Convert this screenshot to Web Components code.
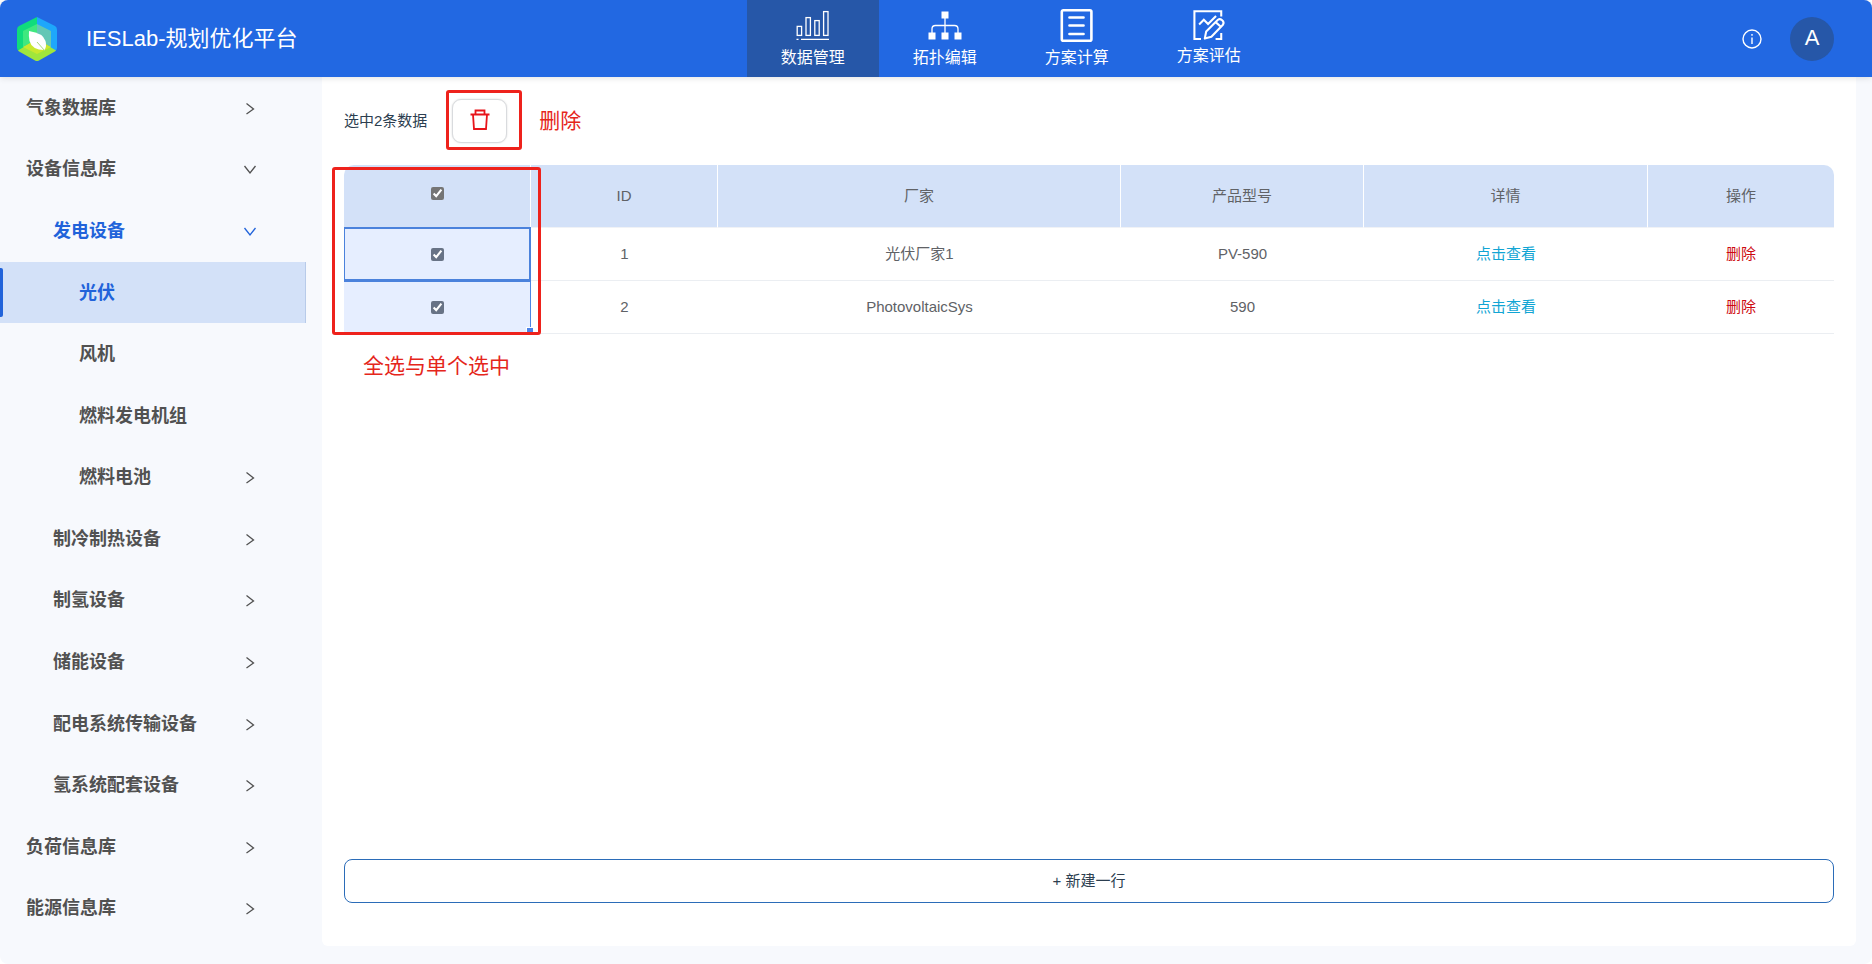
<!DOCTYPE html>
<html lang="zh-CN">
<head>
<meta charset="utf-8">
<title>IESLab-规划优化平台</title>
<style>
  body { margin: 0; background: #fff; font-family: "Liberation Sans", "Noto Sans CJK SC", sans-serif; }
</style>
</head>
<body>
<ies-app></ies-app>
<script>
const define = (name, html) => customElements.define(name, class extends HTMLElement {
  constructor() {
    super();
    this.attachShadow({ mode: "open" }).innerHTML = html;
  }
});

const icons = {
  bars: `<g fill="none" stroke="#fff" stroke-width="1.3"><rect x="1.2" y="18.4" width="4.4" height="9"/><rect x="10" y="9.6" width="4.4" height="17.8"/><rect x="18.800" y="12.6" width="4.4" height="14.8"/><rect x="27.600" y="3.6" width="4.4" height="23.8"/></g><path d="M.5 31.4h2M5 31.4h28" stroke="#fff" stroke-width="1.3"/>`,
  tree: `<path d="M13.5 3.5h7v7h-7zM.5 24.5h7v7h-7zM13.5 24.5h7v7h-7zM26.5 24.5h7v7h-7z" fill="#fff"/><path d="M17 10v15M4 25v-4q0-3.500 3.500-3.500h19q3.500 0 3.500 3.500v4" fill="none" stroke="#fff" stroke-width="1.3"/>`,
  list: `<rect x="1.800" y="2.300" width="29.600" height="30.400" rx="1.500" fill="none" stroke="#fff" stroke-width="2.600"/><path d="M9.500 9.500h14M9.500 17.500h14M9.500 26h14" stroke="#fff" stroke-width="2.700" stroke-linecap="round"/>`,
  edit: `<path d="M30 9V3.500H1.500V33h7M24 33h6v-6.500" fill="none" stroke="#fff" stroke-width="2.200"/><path d="M6.500 17.500l5-5 4.500 4.500 8.500-8.500" fill="none" stroke="#fff" stroke-width="2.200"/><path d="M12.500 32.500l1.500-7.500 12.500-12.500q2-1.500 4.500.5t.8 4.800L19.500 30.500zM24 15l5 4.500" fill="none" stroke="#fff" stroke-width="2.200" stroke-linejoin="round"/>`
};

customElements.define("nav-tab", class extends HTMLElement {
  connectedCallback() {
    this.attachShadow({ mode: "open" }).innerHTML = `
<style>
  :host { display: block; }
  a { box-sizing: border-box; height: 100%; padding-top: 8px; display: flex; flex-direction: column; align-items: center; gap: 6px; color: #fff; text-decoration: none; font-size: 16px; line-height: 20px; }
  svg { width: 34px; height: 34px; }
  :host([compact]) svg { height: 32px; }
  :host([active]) a { background: #2657a8; }
</style>
<a href="#"><svg viewBox="0 0 34 34" aria-hidden="true">${icons[this.getAttribute("icon")]}</svg><slot></slot></a>`;
  }
});

define("app-header", `
<style>
  :host { display: grid; grid-template-columns: 5fr 528px 4fr; height: 77px; background: #2268e2; color: #fff; border-radius: 8px 8px 0 0; box-shadow: 0 1px 6px #0000001f; position: relative; }
  .brand { display: flex; align-items: center; gap: 29px; padding-left: 17px; font-size: 22px; line-height: 28px; white-space: nowrap; }
  .brand svg { width: 40px; height: 44px; }
  nav { display: grid; grid-template-columns: repeat(4, 1fr); }
  .user { display: flex; align-items: center; justify-content: flex-end; gap: 28px; padding-right: 38px; }
  button { border: 0; padding: 0; background: none; color: #fff; font: 22px "Liberation Sans", sans-serif; }
  .info { width: 20px; height: 20px; }
  .info svg { display: block; }
  .avatar { width: 44px; height: 44px; padding-bottom: 2px; border-radius: 50%; background: #2657a8; }
</style>
<div class="brand">
  <svg viewBox="0 0 40 44" aria-hidden="true">
    <path d="M20 0L2 9Q0 10 0 13v18q0 2 2 3l18-12z" fill="#10dc7c"/>
    <path d="M20 0l18 9q2 1 2 4v18q0 2-2 3L20 22z" fill="#1ea7fb"/>
    <path d="M1 33.500L20 22l19 11.500q-.5.8-2 1.500L22 43.500q-2 1-4 0L3 35q-1.500-.7-2-1.500z" fill="#a0e63c"/>
    <path d="M20 7L6 14v16l14-8z" fill="#3fe87f"/>
    <path d="M20 7l14 7v16l-14-8z" fill="#63c7b5"/>
    <path d="M6 30l14-8 14 8-14 7z" fill="#c9e82e"/>
    <path d="M12 14q14 2 16.500 10 1.500 5-1 9Q15 33 12.500 24 11.500 19 12 14z" fill="#fff"/>
    <path d="M20 25l8 9" stroke="#a9d977" stroke-width="1"/>
  </svg>
  <span>IESLab-规划优化平台</span>
</div>
<nav>
  <nav-tab icon="bars" active>数据管理</nav-tab>
  <nav-tab icon="tree">拓扑编辑</nav-tab>
  <nav-tab icon="list">方案计算</nav-tab>
  <nav-tab icon="edit" compact>方案评估</nav-tab>
</nav>
<div class="user">
  <button class="info" aria-label="信息"><svg width="20" height="20" viewBox="0 0 20 20"><circle cx="10" cy="10" r="9" fill="none" stroke="#fff" stroke-width="1.400"/><path d="M10 8.500v6.500M10 5v1.800" stroke="#fff" stroke-width="1.400"/></svg></button>
  <button class="avatar">A</button>
</div>`);

customElements.define("side-item", class extends HTMLElement {
  connectedCallback() {
    const arrow = this.getAttribute("arrow");
    const tag = arrow ? "button" : "a";
    const d = arrow === "down" ? "M1.500 4L7 11l5.500-7" : "M3.500 2.500L10.500 8l-7 5";
    this.attachShadow({ mode: "open" }).innerHTML = `
<style>
  :host { display: flex; flex: 1 0 56px; color: #515151; }
  .row { box-sizing: border-box; width: 100%; display: flex; align-items: center; justify-content: space-between; border: 0; margin: 0; padding: 0 49px 0 26px; background: none; color: inherit; font: bold 18px/26px "Liberation Sans", "Noto Sans CJK SC", sans-serif; text-decoration: none; position: relative; text-align: left; }
  :host([level="2"]) .row { padding-left: 53px; }
  :host([level="3"]) .row { padding-left: 79px; }
  :host([open-path]), :host([active]) { color: #2163da; }
  :host([active]) .row { background: #d3e1f8; border-right: 1px solid #b8cbe9; }
  :host([active]) .row::before { content: ""; position: absolute; left: 0; top: 6px; bottom: 6px; width: 3px; border-radius: 0 2px 2px 0; background: #2163da; }
</style>
<${tag} class="row" ${arrow ? `aria-expanded="${arrow === "down"}"` : `href="#"`}><slot></slot>${arrow ? `<svg width="14" height="14" viewBox="0 0 14 14" aria-hidden="true"><path d="${d}" fill="none" stroke="currentColor" stroke-width="1.300"/></svg>` : ""}</${tag}>`;
  }
});

define("side-menu", `
<style>
  :host { display: flex; }
  nav { flex: 1; display: flex; flex-direction: column; }
</style>
<nav>
  <side-item arrow="right">气象数据库</side-item>
  <side-item arrow="down">设备信息库</side-item>
  <side-item level="2" arrow="down" open-path>发电设备</side-item>
  <side-item level="3" active>光伏</side-item>
  <side-item level="3">风机</side-item>
  <side-item level="3">燃料发电机组</side-item>
  <side-item level="3" arrow="right">燃料电池</side-item>
  <side-item level="2" arrow="right">制冷制热设备</side-item>
  <side-item level="2" arrow="right">制氢设备</side-item>
  <side-item level="2" arrow="right">储能设备</side-item>
  <side-item level="2" arrow="right">配电系统传输设备</side-item>
  <side-item level="2" arrow="right">氢系统配套设备</side-item>
  <side-item arrow="right">负荷信息库</side-item>
  <side-item arrow="right">能源信息库</side-item>
</nav>`);

define("mark-frame", `
<style>
  :host { display: block; position: absolute; box-sizing: border-box; border: 3px solid #ee221c; border-radius: 3px; pointer-events: none; }
</style>`);

define("mark-note", `
<style>
  :host { display: block; color: #e5261b; font-size: 21px; line-height: 28px; }
</style>
<slot></slot>`);

define("device-table", `
<style>
  :host { display: block; }
  table { width: 100%; table-layout: fixed; border-collapse: separate; border-spacing: 0; font-size: 15px; line-height: 20px; color: #606266; text-align: center; }
  th { height: 62px; padding: 0; font-weight: normal; background: #d3e1f8; border-right: 1px solid #fff; border-bottom: 1px solid #f0f2f6; }
  th:first-child { border-top-left-radius: 10px; }
  th:last-child { border-top-right-radius: 10px; border-right: 0; }
  td { height: 52px; padding: 0; border-bottom: 1px solid #ebeef2; }
  input { display: block; width: 13px; height: 13px; margin: 0 auto; accent-color: #757575; }
  th input { margin-bottom: 6px; }
  td input { accent-color: #687386; }
  .pick { position: relative; background: #e6eeff; }
  .pick::after { content: ""; position: absolute; inset: 0; border-right: 1px solid #4b85e4; }
  .current::after { inset: -1px 0 -2px 0; border: 2px solid #4b82dc; border-left-width: 1px; border-bottom-width: 3px; z-index: 1; }
  .handle { position: absolute; right: -2px; bottom: 0; width: 6px; height: 5px; background: #4b82e8; border: 1px solid #fff; border-width: 1px 0 0 1px; z-index: 1; }
  a { color: #11a5d4; text-decoration: none; }
  button { border: 0; padding: 0; background: none; color: #cd0a10; font: inherit; }
</style>
<table>
  <colgroup><col style="width:187px"><col style="width:187px"><col style="width:403px"><col style="width:243px"><col style="width:284px"><col style="width:186px"></colgroup>
  <thead>
    <tr><th><input type="checkbox" checked aria-label="全选"></th><th>ID</th><th>厂家</th><th>产品型号</th><th>详情</th><th>操作</th></tr>
  </thead>
  <tbody>
    <tr><td class="pick current"><input type="checkbox" checked aria-label="选择 1"></td><td>1</td><td>光伏厂家1</td><td>PV-590</td><td><a href="#">点击查看</a></td><td><button>删除</button></td></tr>
    <tr><td class="pick"><input type="checkbox" checked aria-label="选择 2"><span class="handle"></span></td><td>2</td><td>PhotovoltaicSys</td><td>590</td><td><a href="#">点击查看</a></td><td><button>删除</button></td></tr>
  </tbody>
</table>`);

define("data-panel", `
<style>
  :host { display: flex; flex-direction: column; background: #fff; padding: 22px 22px 43px; border-radius: 0 0 6px 6px; }
  .bar { display: flex; align-items: center; margin-bottom: 22px; font-size: 15px; line-height: 20px; color: #2c3e50; }
  .trash { position: relative; margin: 0 32px 0 25px; }
  .trash button { display: flex; justify-content: center; align-items: center; width: 55px; height: 44px; padding: 0 0 2px; background: #fff; border: 1px solid #d9dbde; border-radius: 9px; box-shadow: 0 0 2px #00000026; }
  .trash mark-frame { inset: -9px -15px -7px -6px; }
  .grid { position: relative; }
  .grid mark-frame { left: -12px; top: 2px; bottom: -1px; width: 209px; z-index: 2; }
  .below { margin: 18px 0 24px 19px; }
  .add { margin-top: auto; height: 44px; border: 1px solid #2b6cb8; border-radius: 8px; background: #fff; color: #2c3e50; font: 15px/20px "Liberation Sans", "Noto Sans CJK SC", sans-serif; }
</style>
<div class="bar">
  <span>选中2条数据</span>
  <div class="trash">
    <button aria-label="删除所选"><svg width="20" height="22" viewBox="0 0 20 22"><path d="M.5 5.500h19M3 5.500l1 14.500h12l1-14.500M5.500 5V1.500h9V5" fill="none" stroke="#e8141a" stroke-width="1.800"/></svg></button>
    <mark-frame></mark-frame>
  </div>
  <mark-note>删除</mark-note>
</div>
<div class="grid">
  <device-table></device-table>
  <mark-frame></mark-frame>
</div>
<mark-note class="below">全选与单个选中</mark-note>
<button class="add">+ 新建一行</button>`);

define("ies-app", `
<style>
  :host { display: flex; flex-direction: column; min-height: 100vh; background: #f7f9fd; border-radius: 8px; }
  app-header { flex: none; z-index: 3; }
  .body { flex: 1; display: grid; grid-template-columns: 306px 1fr; column-gap: 16px; padding-right: 16px; }
  side-menu { padding-bottom: 25px; }
  data-panel { margin-bottom: 18px; }
</style>
<app-header></app-header>
<div class="body">
  <side-menu></side-menu>
  <data-panel></data-panel>
</div>`);
</script>
</body>
</html>
